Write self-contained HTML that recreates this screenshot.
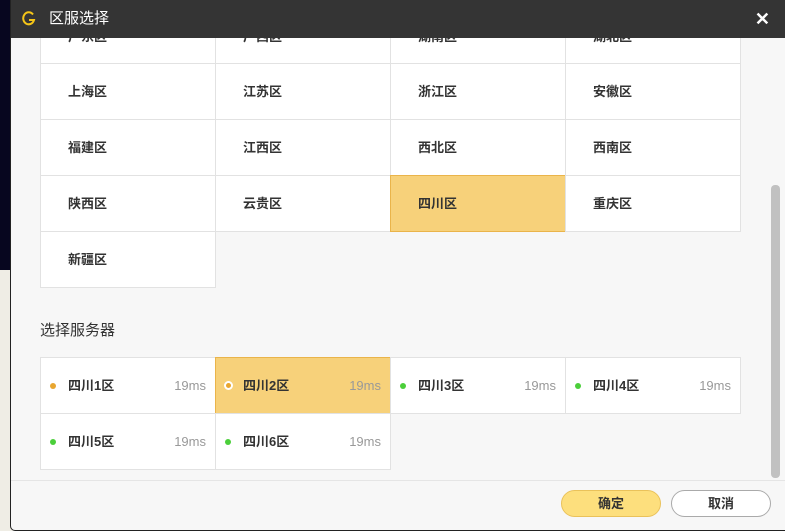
<!DOCTYPE html>
<html><head><meta charset="utf-8"><style>
*{margin:0;padding:0;box-sizing:border-box}
body{width:785px;height:531px;overflow:hidden;position:relative;background:#efede5;font-family:"Liberation Sans","Noto Sans CJK SC",sans-serif}
.bgtop{position:absolute;left:0;top:0;width:12px;height:270px;background:#07061f}
.dlg{position:absolute;left:10px;top:0;width:775px;height:531px;background:#f7f7f7;border-left:1px solid #222;border-bottom:1px solid #222;border-radius:0 0 0 5px;overflow:hidden}
.title{position:absolute;left:-1px;top:0;width:776px;height:38px;background:#343434;color:#fff;font-size:15px;line-height:38px;z-index:5}
.title .t{position:absolute;left:39px}
.title .x{position:absolute;right:16px;top:0;font-size:18px;font-weight:bold}
.cell{position:absolute;width:176px;height:57px;background:#fff;border:1px solid #e2e2e2;font-size:13px;font-weight:bold;color:#333;line-height:55px;padding-left:27px}
.sel{background:#f7d17a;border-color:#eab44a}
.lbl{position:absolute;left:29px;top:319px;font-size:15px;color:#333}
.srv .ms{position:absolute;right:9px;top:0;font-weight:normal;color:#999;font-size:13px}
.dot{position:absolute;left:9px;top:25px;width:6px;height:6px;border-radius:50%;background:#4bcf3a}
.foot{position:absolute;left:0;top:480px;width:775px;border-top:1px solid #e5e5e5}
.btn{position:absolute;top:490px;width:100px;height:27px;border-radius:14px;font-size:13px;font-weight:bold;color:#333;text-align:center;line-height:25px}
.scroll{position:absolute;left:760px;top:185px;width:9px;height:293px;background:#c1c1c1;border-radius:4px}
</style></head><body>
<div class="bgtop"></div>
<div class="dlg">
<div class="title"><svg style="position:absolute;left:12px;top:11px" width="14" height="16" viewBox="0 0 14 16"><path d="M11 3.5A5.5 6 0 1 0 12 9H7" fill="none" stroke="#f5c518" stroke-width="2"/></svg><span class="t">区服选择</span><span class="x">✕</span></div>
<div class="cell" style="left:29px;top:8px">广东区</div><div class="cell" style="left:204px;top:8px">广西区</div><div class="cell" style="left:379px;top:8px">湖南区</div><div class="cell" style="left:554px;top:8px">湖北区</div>
<div class="cell" style="left:29px;top:63px">上海区</div><div class="cell" style="left:204px;top:63px">江苏区</div><div class="cell" style="left:379px;top:63px">浙江区</div><div class="cell" style="left:554px;top:63px">安徽区</div>
<div class="cell" style="left:29px;top:119px">福建区</div><div class="cell" style="left:204px;top:119px">江西区</div><div class="cell" style="left:379px;top:119px">西北区</div><div class="cell" style="left:554px;top:119px">西南区</div>
<div class="cell" style="left:29px;top:175px">陕西区</div><div class="cell" style="left:204px;top:175px">云贵区</div><div class="cell sel" style="left:379px;top:175px">四川区</div><div class="cell" style="left:554px;top:175px">重庆区</div>
<div class="cell" style="left:29px;top:231px">新疆区</div>
<div class="lbl">选择服务器</div>
<div class="cell srv" style="left:29px;top:357px"><i class="dot" style="background:#e8a630"></i>四川1区<span class="ms">19ms</span></div>
<div class="cell srv sel" style="left:204px;top:357px"><i class="dot" style="background:#e8a630;border:2px solid #fff;width:9px;height:9px;top:23px;left:8px"></i>四川2区<span class="ms">19ms</span></div>
<div class="cell srv" style="left:379px;top:357px"><i class="dot"></i>四川3区<span class="ms">19ms</span></div>
<div class="cell srv" style="left:554px;top:357px"><i class="dot"></i>四川4区<span class="ms">19ms</span></div>
<div class="cell srv" style="left:29px;top:413px"><i class="dot"></i>四川5区<span class="ms">19ms</span></div>
<div class="cell srv" style="left:204px;top:413px"><i class="dot"></i>四川6区<span class="ms">19ms</span></div>
<div class="scroll"></div>
<div class="foot"></div>
<div class="btn" style="left:550px;background:#fddf7d;border:1px solid #eac25a">确定</div>
<div class="btn" style="left:660px;background:#fff;border:1px solid #aaa">取消</div>
</div>
</body></html>
